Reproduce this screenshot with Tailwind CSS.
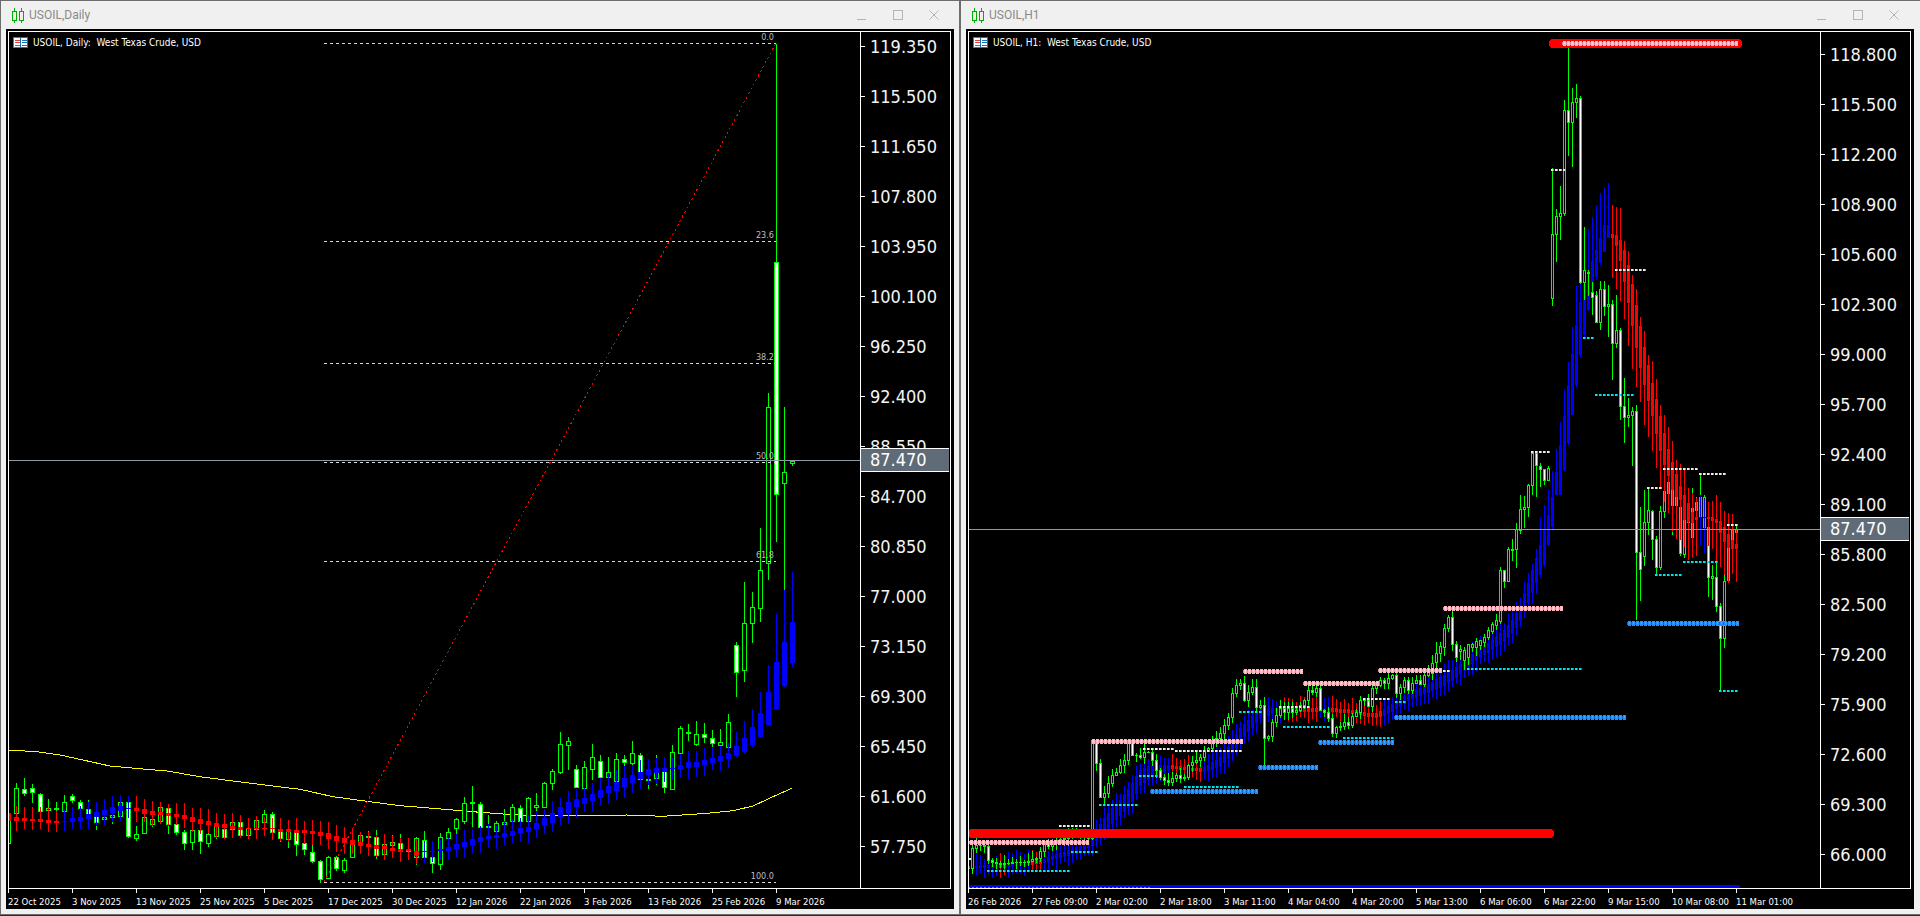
<!DOCTYPE html>
<html lang="en">
<head>
    <meta charset="UTF-8">
    <title>USOIL charts</title>
    <script src="https://cdn.jsdelivr.net/npm/@tailwindcss/browser@4"></script>
</head>
<body class="w-[1920px] h-[916px] overflow-hidden flex bg-[#2b2b2b] font-['DejaVu_Sans',sans-serif]">

    <!-- daily window -->
    <div class="w-[960px] h-[915px] shrink-0 flex flex-col bg-[#f0f0f0] border border-[#6d6d6d]">
        <div class="h-[28px] shrink-0 flex items-center pl-[11px] pr-[7px]">
            <svg width="12" height="15" viewBox="0 0 12 15" fill="none" stroke="#00b000" stroke-width="1" shape-rendering="crispEdges"><path d="M2.5 0v15M9.5 0v15"/><rect x="0.5" y="3.5" width="4" height="9" fill="#f0f0f0"/><rect x="7.5" y="3.5" width="4" height="9" fill="#f0f0f0"/></svg>
            <span class="ml-[5px] text-[12px] text-[#8a8a8a] font-['Roboto',sans-serif] leading-none">USOIL,Daily</span>
            <div class="ml-auto flex text-[#b4b4b4]">
                <div class="w-[36px] h-[28px] flex items-center justify-center"><svg width="10" height="10" viewBox="0 0 10 10" shape-rendering="crispEdges"><rect y="9" width="9" height="1" fill="#b4b4b4"/></svg></div>
                <div class="w-[36px] h-[28px] flex items-center justify-center"><svg width="10" height="10" viewBox="0 0 10 10" shape-rendering="crispEdges"><rect x="0.5" y="0.5" width="9" height="9" fill="none" stroke="#b4b4b4"/></svg></div>
                <div class="w-[36px] h-[28px] flex items-center justify-center"><svg width="10" height="10" viewBox="0 0 10 10"><path d="M0.5 0.5l9 9M9.5 0.5l-9 9" stroke="#b4b4b4" fill="none"/></svg></div>
            </div>
        </div>
        <div class="w-[948px] h-[880px] ml-[5px] bg-black pl-[2px] pt-[2px] flex flex-col">
            <div class="w-[943px] h-[858px] shrink-0 flex border border-white">
                <div class="w-[851px] h-full relative overflow-hidden">
                    <svg id="dailyPlot" class="block text-[9px] font-['DejaVu_Sans',sans-serif] font-stretch-condensed" width="851" height="856" viewBox="9 32 851 856" shape-rendering="crispEdges"></svg>
                    <div class="absolute left-[4px] top-[5px] flex items-center gap-[5px] text-[10px] text-white font-stretch-condensed whitespace-pre leading-none">
                        <svg width="15" height="11" viewBox="0 0 15 11" shape-rendering="crispEdges"><rect width="15" height="11" fill="#fff"/><rect x="0.5" y="0.5" width="7" height="10" fill="#fff" stroke="#d9453a"/><rect x="7.5" y="0.5" width="7" height="10" fill="#fff" stroke="#1c6db5"/><path d="M2 3h5M2 5.500h5M2 8h5" stroke="#d9453a"/><path d="M9 3h5M9 5.500h5M9 8h5" stroke="#1c6db5"/></svg>
                        <span>USOIL, Daily:  West Texas Crude, USD</span>
                    </div>
                </div>
                <div id="dailyPrices" class="w-[90px] h-full relative overflow-hidden border-l border-white"></div>
            </div>
            <div id="dailyTimes" class="flex text-[9.5px] text-white font-stretch-condensed"></div>
        </div>
    </div>

    <!-- hourly window -->
    <div class="w-[960px] h-[915px] shrink-0 flex flex-col bg-[#f0f0f0] border-l border-t border-b border-[#6d6d6d]">
        <div class="h-[28px] shrink-0 flex items-center pl-[11px] pr-[8px]">
            <svg width="12" height="15" viewBox="0 0 12 15" fill="none" stroke="#00b000" stroke-width="1" shape-rendering="crispEdges"><path d="M2.5 0v15M9.5 0v15"/><rect x="0.5" y="3.5" width="4" height="9" fill="#f0f0f0"/><rect x="7.5" y="3.5" width="4" height="9" fill="#f0f0f0"/></svg>
            <span class="ml-[5px] text-[12px] text-[#8a8a8a] font-['Roboto',sans-serif] leading-none">USOIL,H1</span>
            <div class="ml-auto flex text-[#b4b4b4]">
                <div class="w-[36px] h-[28px] flex items-center justify-center"><svg width="10" height="10" viewBox="0 0 10 10" shape-rendering="crispEdges"><rect y="9" width="9" height="1" fill="#b4b4b4"/></svg></div>
                <div class="w-[36px] h-[28px] flex items-center justify-center"><svg width="10" height="10" viewBox="0 0 10 10" shape-rendering="crispEdges"><rect x="0.5" y="0.5" width="9" height="9" fill="none" stroke="#b4b4b4"/></svg></div>
                <div class="w-[36px] h-[28px] flex items-center justify-center"><svg width="10" height="10" viewBox="0 0 10 10"><path d="M0.5 0.5l9 9M9.5 0.5l-9 9" stroke="#b4b4b4" fill="none"/></svg></div>
            </div>
        </div>
        <div class="w-[948px] h-[880px] ml-[5px] bg-black pl-[2px] pt-[2px] flex flex-col">
            <div class="w-[943px] h-[858px] shrink-0 flex border border-white">
                <div class="w-[851px] h-full relative overflow-hidden">
                    <svg id="hourPlot" class="block" width="851" height="856" viewBox="969 32 851 856" shape-rendering="crispEdges"></svg>
                    <div class="absolute left-[4px] top-[5px] flex items-center gap-[5px] text-[10px] text-white font-stretch-condensed whitespace-pre leading-none">
                        <svg width="15" height="11" viewBox="0 0 15 11" shape-rendering="crispEdges"><rect width="15" height="11" fill="#fff"/><rect x="0.5" y="0.5" width="7" height="10" fill="#fff" stroke="#d9453a"/><rect x="7.5" y="0.5" width="7" height="10" fill="#fff" stroke="#1c6db5"/><path d="M2 3h5M2 5.500h5M2 8h5" stroke="#d9453a"/><path d="M9 3h5M9 5.500h5M9 8h5" stroke="#1c6db5"/></svg>
                        <span>USOIL, H1:  West Texas Crude, USD</span>
                    </div>
                </div>
                <div id="hourPrices" class="w-[90px] h-full relative overflow-hidden border-l border-white"></div>
            </div>
            <div id="hourTimes" class="flex text-[9.5px] text-white font-stretch-condensed"></div>
        </div>
    </div>

    <script>
        // axis rows are 50px apart, first one is pulled up so its tick lands on the right pixel
        function fillPrices(id, labels, pullClass, boxClass) {
            const rows = labels.map(p =>
                `<div class="h-[50px] flex items-center"><span class="w-[4px] h-px bg-white"></span><span class="ml-[5px] text-[18px] text-[#f4f4f4] leading-none font-stretch-condensed">${p}</span></div>`
            ).join('');
            document.getElementById(id).innerHTML =
                `<div class="${pullClass}">${rows}</div>` +
                `<div class="absolute left-0 w-[88px] h-[24px] flex items-center pl-[9px] bg-[#5f6b76] border-y border-white text-[18px] text-white leading-none font-stretch-condensed ${boxClass}">87.470</div>`;
        }
        function fillTimes(id, labels) {
            document.getElementById(id).innerHTML = labels.map(t =>
                `<div class="w-[64px] shrink-0 whitespace-nowrap leading-none"><div class="w-px h-[4px] bg-white"></div><div class="mt-[4px]">${t}</div></div>`
            ).join('');
        }
        fillPrices('dailyPrices', ['119.350','115.500','111.650','107.800','103.950','100.100','96.250','92.400','88.550','84.700','80.850','77.000','73.150','69.300','65.450','61.600','57.750'], '-mt-[10.5px]', 'top-[416px]');
        fillPrices('hourPrices', ['118.800','115.500','112.200','108.900','105.600','102.300','99.000','95.700','92.400','89.100','85.800','82.500','79.200','75.900','72.600','69.300','66.000'], '-mt-[2.5px]', 'top-[485px]');
        fillTimes('dailyTimes', ['22 Oct 2025','3 Nov 2025','13 Nov 2025','25 Nov 2025','5 Dec 2025','17 Dec 2025','30 Dec 2025','12 Jan 2026','22 Jan 2026','3 Feb 2026','13 Feb 2026','25 Feb 2026','9 Mar 2026']);
        fillTimes('hourTimes', ['26 Feb 2026','27 Feb 09:00','2 Mar 02:00','2 Mar 18:00','3 Mar 11:00','4 Mar 04:00','4 Mar 20:00','5 Mar 13:00','6 Mar 06:00','6 Mar 22:00','9 Mar 15:00','10 Mar 08:00','11 Mar 01:00']);

        const GREEN = '#00ff00', WHITE = '#ffffff', BLACK = '#000000', BLUE = '#0000ff', RED = '#ff0000';
        const rect = (x, y, w, h, fill) => `<rect x="${x}" y="${y}" width="${w}" height="${Math.max(h, 1)}" fill="${fill}"/>`;

        let seed = 7;
        function rnd(a, b) {
            seed = (seed * 16807) % 2147483647;
            return a + (seed % 1000) / 1000 * (b - a);
        }

        function candle(x, half, t, b, white, hi, lo) {
            let s = rect(x, hi, 1, lo - hi, GREEN);
            s += rect(x - half, t, half * 2 + 1, b - t + 1, GREEN);
            if (b - t >= 2) s += rect(x - half + 1, t + 1, half * 2 - 1, b - t - 1, white ? WHITE : BLACK);
            return s;
        }
        function haBar(x, half, t, b, hi, lo, color) {
            return rect(x, hi, 1, lo - hi, color) + rect(x - half, t, half * 2 + 1, b - t, color);
        }

        // ---- daily chart, values read off the screen: y = 700 + z / 3
        const dailyZ = [
            [340,430,0,335,432],[265,338,0,250,352],[268,280,1,235,288],[265,277,1,252,310],[282,332,1,280,340],[325,331,0,298,345],[325,328,0,305,345],[307,332,0,285,340],
            [287,300,1,283,310],[305,325,1,300,335],[328,345,1,300,360],[337,365,1,330,390],[350,358,0,300,372],[345,350,0,332,372],[307,347,0,292,350],[307,407,1,295,413],
            [403,413,0,378,423],[352,398,0,340,400],[358,372,0,340,380],[322,362,0,312,372],[325,372,1,315,402],[373,395,1,345,405],[397,428,1,390,450],[391,425,0,380,450],
            [390,422,1,385,462],[403,428,0,400,442],[378,408,0,355,417],[387,410,1,350,416],[367,387,0,350,390],[367,405,1,365,408],[385,405,0,358,408],[360,387,0,348,390],
            [343,365,0,330,380],[343,395,1,335,400],[393,413,1,388,425],[392,417,0,385,445],[390,433,1,385,468],[430,448,1,425,465],[455,482,1,435,490],[482,538,1,480,548],
            [472,535,0,468,538],[472,505,1,468,512],[481,510,0,475,518],[420,470,0,415,472],[405,430,0,400,432],[408,411,0,392,430],[410,466,1,390,478],[433,463,0,425,476],
            [427,434,0,405,450],[430,447,1,403,450],[446,452,0,432,480],[415,470,0,410,495],[420,470,1,393,482],[470,490,1,465,518],[412,493,0,400,510],[397,415,0,385,440],
            [356,385,0,355,420],[308,362,0,292,372],[305,308,0,258,380],[313,380,1,305,385],[378,381,0,345,420],[370,392,0,362,395],[367,373,0,328,390],[322,364,0,312,368],
            [325,362,1,315,365],[295,362,0,290,365],[316,320,0,280,345],[250,320,0,246,325],[212,248,0,208,270],[132,215,0,96,222],[124,136,0,112,210],[208,260,1,195,262],
            [200,263,0,183,265],[172,206,0,132,240],[182,230,1,165,235],[215,230,0,170,245],[178,242,0,158,248],[178,187,1,165,210],[160,188,0,123,205],[165,238,1,160,240],
            [236,240,0,215,268],[206,235,0,165,255],[212,262,1,205,278],[155,266,0,135,268],[85,160,0,78,165],[96,100,0,72,122],[103,131,0,62,138],[103,111,1,70,130],
            [113,130,1,90,140],[127,135,0,88,208],[65,142,0,42,145],[-165,-84,1,-174,-9],[-230,-90,0,-354,-55],[-278,-230,0,-324,-171],[-390,-275,0,-516,-235],[-878,-410,0,-920,-360],
            [-1313,-617,1,-1968,-475],[-683,-650,0,-878,-330],[-718,-712,0,-720,-702]
        ];
        const dailyHaZ = [
            [340,362],[350,362],[354,363],[357,362],[358,365],[360,370],[363,370],[363,365],[355,365],[352,363],[342,358],[337,352],[331,345],[322,340],[318,332],[323,326],
            [324,333],[328,342],[334,345],[336,345],[340,347],[343,351],[346,358],[352,365],[358,372],[364,376],[370,381],[373,385],[377,387],[381,389],[384,386],[384,386],
            [385,387],[385,388],[388,396],[388,396],[391,399],[391,400],[393,403],[397,407],[400,416],[408,423],[415,430],[421,434],[427,437],[432,440],[436,446],[438,448],
            [444,452],[446,455],[448,454],[452,468],[454,456],[452,454],[448,454],[442,453],[433,446],[425,441],[418,434],[412,425],[408,418],[406,415],[400,410],[394,407],
            [385,400],[380,395],[370,386],[355,376],[340,369],[322,352],[307,338],[298,322],[295,312],[283,302],[270,293],[258,280],[246,272],[235,260],[224,248],[215,236],
            [208,225],[205,220],[205,215],[205,208],[196,206],[186,204],[187,202],[181,195],[175,188],[168,182],[160,176],[138,167,95,172],[115,155,63,160],[82,134,27,140],
            [40,110,-24,112],[-24,75,-105,78],[-114,26,-258,30],[-174,-42,-330,-39],[-234,-111,-384,-99]
        ];
        const dy = z => Math.round(700 + z / 3);
        let daily = '';

        // moving average
        const ma = [[8,150],[37,155],[60,165],[83,180],[110,198],[143,207],[167,213],[200,230],[233,243],[267,256],[300,268],[333,290],[367,304],[400,317],[433,325],[480,337],[503,342],[540,348],[627,345],[663,349],[707,340],[733,332],[753,318],[773,290],[792,265]];
        daily += `<polyline points="${ma.map(p => p[0] + ',' + (700 + p[1] / 3).toFixed(1)).join(' ')}" fill="none" stroke="#ffff00" stroke-width="1"/>`;

        dailyZ.forEach((c, i) => {
            daily += candle(8 + 8 * i, 2, dy(c[0]), dy(c[1]), c[2], dy(c[3]), dy(c[4]));
        });
        dailyHaZ.forEach((c, i) => {
            const red = i < 7 || (i >= 16 && i <= 51);
            const hi = c[2] !== undefined ? c[2] : c[0] - 28 - rnd(0, 10);
            const lo = c[3] !== undefined ? c[3] : c[1] + 22 + rnd(0, 12);
            daily += haBar(8 + 8 * i, 2, dy(c[0]), dy(c[1]), dy(hi), dy(lo), red ? RED : BLUE);
        });

        // fibo levels
        [[43,'0.0'],[241,'23.6'],[363,'38.2'],[462,'50.0'],[561,'61.8'],[882,'100.0']].forEach(f => {
            daily += `<line x1="324" x2="776" y1="${f[0] + 0.5}" y2="${f[0] + 0.5}" stroke="#d8d8d8" stroke-dasharray="3 3"/>`;
            daily += `<text x="774" y="${f[0] - 3}" text-anchor="end" fill="#bdbdbd">${f[1]}</text>`;
        });
        daily += `<line x1="324" y1="882" x2="776" y2="43" stroke="${RED}" stroke-dasharray="2 3"/>`;
        daily += rect(9, 460, 851, 1, '#8c9aa6');
        document.getElementById('dailyPlot').innerHTML = daily;

        // ---- hourly chart, real pixels
        // early part: closes only, wicks get a little noise
        const closes = [[968,868],[972,848],[976,845],[980,845],[984,846],[988,860],[992,862],[1000,864],[1012,862],[1024,862],[1036,858],[1044,843],[1048,846],[1056,840],[1064,838],[1072,830],[1080,836],[1088,838],[1092,742],[1096,763],[1100,797],[1104,793],[1108,783],[1112,775],[1116,772],[1120,765],[1124,760],[1128,743],[1132,755],[1136,755],[1140,757],[1144,752],[1148,752],[1152,760],[1156,770],[1160,777],[1164,780],[1168,782],[1172,778],[1176,775],[1180,778],[1184,777],[1188,765],[1192,762],[1196,760],[1200,757],[1204,750],[1208,748],[1212,742],[1216,738],[1220,733],[1224,725],[1228,717],[1232,693],[1236,685],[1240,683],[1244,700],[1248,692],[1252,687],[1256,707],[1260,705],[1264,738],[1268,736],[1272,722],[1276,715],[1280,708],[1284,712],[1288,708],[1292,712],[1296,710],[1300,705],[1304,700],[1308,690],[1312,692],[1316,688],[1320,710],[1324,712],[1328,718],[1332,733],[1336,727],[1340,726],[1344,722],[1348,725],[1352,716],[1356,712],[1360,700],[1364,700],[1368,706],[1372,688],[1376,685],[1380,680],[1384,683],[1388,678],[1392,675],[1396,693],[1400,687],[1404,680],[1408,690],[1412,683],[1416,680],[1420,684],[1424,675],[1428,670]];
        // spike part read candle by candle: x, top, bottom, white, high, low
        const bars = [[1432,663,673,0,655,680],[1436,653,662,0,642,668],[1440,646,653,0,642,662],[1444,628,647,0,624,656],[1448,617,628,0,615,632],[1452,617,644,1,611,651],[1456,644,657,1,641,662],[1460,649,651,0,645,660],[1464,650,660,0,647,670],[1468,644,657,0,644,665],[1472,644,647,0,643,652],[1476,641,647,0,638,656],[1480,640,645,0,640,650],[1484,637,642,0,634,647],[1488,630,637,0,627,640],[1492,624,631,0,622,634],[1496,620,625,0,614,630],[1500,570,621,0,567,624],[1504,570,581,1,570,588],[1508,549,581,0,547,582],[1512,549,550,0,539,561],[1516,529,549,0,523,568],[1520,509,530,0,495,534],[1524,507,509,0,496,528],[1528,485,507,0,484,517],[1532,453,485,0,453,495],[1536,453,465,1,452,497],[1540,466,469,1,463,487],[1544,469,480,1,469,485],[1548,468,480,0,466,481],[1552,234,298,0,168,306],[1556,216,234,0,209,262],[1560,213,216,0,186,240],[1564,110,213,0,100,216],[1568,110,122,1,48,156],[1572,102,122,0,88,167],[1576,98,102,0,84,118],[1580,98,282,1,96,284],[1584,270,282,0,227,300],[1588,272,273,0,270,296],[1592,292,297,1,282,315],[1596,295,322,1,291,322],[1600,289,322,0,281,330],[1604,289,306,1,281,316],[1608,304,306,0,285,337],[1612,304,343,1,300,380],[1616,330,343,0,295,348],[1620,330,406,1,328,420],[1624,406,417,1,378,443],[1628,415,417,0,398,427],[1632,411,415,0,407,466],[1636,411,552,1,405,620],[1640,552,569,1,507,601],[1644,522,556,0,490,566],[1648,510,522,0,487,535],[1652,511,539,1,510,560],[1656,539,567,1,536,575],[1660,511,567,0,506,570],[1664,491,511,0,482,518],[1668,482,493,0,470,498],[1672,488,505,0,482,535],[1676,488,505,0,478,505],[1680,507,553,1,505,556],[1684,514,554,0,485,558],[1688,504,522,0,490,530],[1692,508,537,0,488,537],[1696,502,510,0,497,520],[1700,497,516,0,473,530],[1704,497,527,0,495,540],[1708,527,577,1,525,597],[1712,576,578,0,565,600],[1716,577,606,1,555,612],[1720,606,638,1,603,690],[1724,581,638,0,571,648],[1728,545,580,0,540,582],[1732,530,540,0,527,545],[1736,530,532,0,526,540]];
        // heiken ashi overlay: x, top, bottom (interpolated between points)
        const ha = [[968,866,868],[1000,864,868],[1040,860,864],[1060,853,858],[1080,846,852],[1092,838,846],[1100,824,836],[1110,810,826],[1120,800,816],[1130,786,806],[1140,770,786],[1150,765,778],[1170,765,769],[1195,768,771],[1205,767,772],[1220,757,767],[1230,745,757],[1240,728,742],[1250,718,730],[1260,708,718],[1280,708,712],[1330,708,712],[1355,710,714],[1375,714,718],[1385,708,716],[1395,702,710],[1410,692,700],[1430,683,692],[1440,677,688],[1456,667,678],[1468,657,667],[1480,648,658],[1492,640,650],[1504,630,642],[1512,620,634],[1516,613,628],[1520,605,621],[1524,593,612],[1528,583,603],[1532,570,593],[1536,558,583],[1540,545,575],[1544,530,565],[1548,515,545],[1552,497,527],[1556,472,495],[1560,445,495],[1564,416,470],[1568,385,443],[1572,354,415],[1576,325,385],[1580,302,355],[1584,285,335],[1588,270,310],[1592,261,290],[1596,250,277],[1600,238,263],[1604,225,252],[1608,225,238],[1612,234,238],[1616,235,246],[1620,240,261],[1624,250,282],[1628,265,303],[1632,284,326],[1636,305,348],[1640,326,368],[1644,347,385],[1648,365,401],[1652,383,416],[1656,399,434],[1660,416,451],[1664,433,465],[1668,449,476],[1672,462,490],[1676,474,497],[1680,486,500],[1684,495,520],[1688,503,522],[1692,512,523],[1696,517,520],[1700,517,518],[1704,517,518],[1708,517,519],[1712,517,521],[1716,519,523],[1720,521,533],[1724,527,542],[1728,534,548],[1732,540,549],[1736,544,549]];
        function haAt(x) {
            for (let i = 1; i < ha.length; i++) {
                if (x <= ha[i][0]) {
                    const a = ha[i - 1], b = ha[i], k = (x - a[0]) / (b[0] - a[0]);
                    return [a[1] + (b[1] - a[1]) * k, a[2] + (b[2] - a[2]) * k];
                }
            }
            return ha[ha.length - 1].slice(1);
        }
        function closeAt(x) {
            for (let i = 1; i < closes.length; i++) {
                if (x <= closes[i][0]) {
                    const a = closes[i - 1], b = closes[i], k = (x - a[0]) / (b[0] - a[0]);
                    return a[1] + (b[1] - a[1]) * k;
                }
            }
            return closes[0][1];
        }
        const isRedHa = x => x < 972 || (x >= 1000 && x <= 1004) || (x >= 1032 && x <= 1040) || (x >= 1172 && x <= 1200) || (x >= 1284 && x <= 1316) || (x >= 1332 && x <= 1380) || (x >= 1612 && x !== 1700 && x !== 1704);

        function haSvg(from, to) {
            let s = '';
            for (let x = from; x <= to; x += 4) {
                const h = haAt(x);
                let up, down;
                if (x < 1540) { up = 6 + rnd(0, 6); down = 5 + rnd(0, 6); }
                else if (x < 1576) { up = 22 + rnd(0, 6); down = rnd(0, 3); }
                else if (x < 1612) { up = 37 + rnd(0, 8); down = rnd(0, 3); }
                else if (x < 1624) { up = 24 + rnd(0, 10); down = 40 + rnd(0, 4); }
                else if (x < 1680) { up = 8 + rnd(0, 14); down = 34 + rnd(0, 10); }
                else { up = 14 + rnd(0, 12); down = 18 + rnd(0, 22); }
                s += haBar(x, 1, Math.round(h[0]), Math.round(h[1]), Math.round(h[0] - up), Math.round(h[1] + down), isRedHa(x) ? RED : BLUE);
            }
            return s;
        }

        let hour = haSvg(968, 1636);
        let prev = closeAt(968);
        for (let x = 968; x <= 1428; x += 4) {
            const c = closeAt(x);
            const t = Math.round(Math.min(prev, c)), b = Math.round(Math.max(prev, c));
            let hi = t - Math.round(rnd(1, 8)), lo = b + Math.round(rnd(1, 8));
            if (x === 1264) lo = 765;
            hour += candle(x, 1, t, b, c > prev, hi, lo);
            prev = c;
        }
        bars.forEach(c => { hour += candle(c[0], 1, c[1], c[2], c[3], c[4], c[5]); });
        // on the way down the red bars sit over the candles
        hour += haSvg(1640, 1736);

        // support / resistance dots, 4px beads with a notch between them
        const beads = (x1, x2, y, base, light, dark) => {
            let s = '';
            for (let x = x1; x < x2 - 2; x += 4) {
                s += rect(x, y - 1, 1, 3, dark) + rect(x + 1, y - 2, 3, 5, base) + rect(x + 2, y - 1, 1, 2, light);
            }
            return s;
        };
        const dots = (x1, x2, y, dark, light) => {
            let s = '';
            for (let x = x1; x < x2 - 1; x += 4) s += rect(x, y, 2, 2, light) + rect(x + 2, y, 1, 2, dark);
            return s;
        };
        // thick red bars
        hour += `<rect x="968" y="829" width="586" height="9" rx="4" fill="${RED}"/>`;
        hour += `<rect x="1549" y="39" width="193" height="9" rx="4" fill="${RED}"/>`;
        hour += rect(968, 885, 772, 3, BLUE);
        for (let x = 968; x < 1150; x += 4) hour += rect(x, 887, 2, 1, '#3b8cff');
        [[969,1091,842],[1091,1243,741],[1243,1303,671],[1303,1379,683],[1378,1443,670],[1443,1564,608],[1562,1738,43]].forEach(b => {
            hour += beads(b[0], b[1], b[2], '#ffb6c1', '#ffd4da', '#d98d9a');
        });
        [[1150,1258,791],[1258,1318,767],[1318,1394,742],[1394,1627,717],[1627,1738,623]].forEach(b => {
            hour += beads(b[0], b[1], b[2], '#1e90ff', '#45a6ff', '#1268c4');
        });
        [[987,1070,870],[1071,1098,851],[1099,1138,804],[1139,1160,775],[1184,1238,786],[1239,1262,711],[1283,1332,726],[1343,1393,737],[1395,1407,701],[1467,1582,668],[1583,1593,337],[1595,1633,394],[1655,1682,574],[1683,1717,561],[1719,1737,690]].forEach(b => {
            hour += dots(b[0], b[1], b[2], '#008b9b', '#00e5f0');
        });
        [[969,974,858],[1059,1090,825],[1143,1173,748],[1175,1242,750],[1279,1310,706],[1363,1390,698],[1443,1450,670],[1531,1550,451],[1551,1566,169],[1615,1646,269],[1647,1662,487],[1663,1698,468],[1699,1726,473],[1727,1738,524]].forEach(b => {
            hour += dots(b[0], b[1], b[2], '#b98f96', '#f2ecec');
        });
        hour += rect(969, 529, 851, 1, '#8c9aa6');
        document.getElementById('hourPlot').innerHTML = hour;
    </script>
</body>
</html>
